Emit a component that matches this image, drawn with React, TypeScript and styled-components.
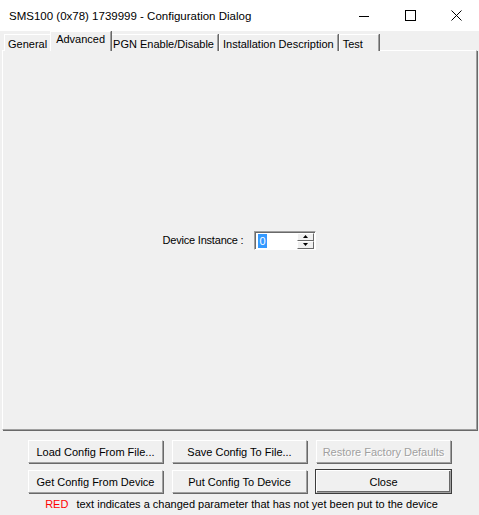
import React from 'react'
import styled, { createGlobalStyle } from 'styled-components'

const GlobalStyle = createGlobalStyle`
  html, body {
    margin: 0;
    padding: 0;
    background: #f0f0f0;
  }
  * {
    box-sizing: border-box;
  }
`

const Window = styled.div`
  width: 479px;
  height: 515px;
  display: flex;
  flex-direction: column;
  background: #f0f0f0;
  font-family: 'Liberation Sans', Arial, sans-serif;
  font-size: 11px;
  color: #000;
  overflow: hidden;
`

const TitleBar = styled.div`
  height: 31px;
  flex-shrink: 0;
  display: flex;
  align-items: center;
  background: #fff;
`

const Title = styled.div`
  flex: 1;
  padding-left: 9px;
  font-size: 11.5px;
  color: #000;
`

const CaptionButton = styled.div`
  width: 46px;
  height: 31px;
  display: flex;
  align-items: center;
  justify-content: center;
`

const TabStrip = styled.div`
  height: 20px;
  flex-shrink: 0;
  display: flex;
  align-items: flex-end;
  padding-left: 4px;
  position: relative;
  z-index: 1;
`

const Tab = styled.div<{ $active?: boolean; $minWidth?: number }>`
  height: ${({ $active }) => ($active ? '20px' : '17px')};
  min-width: ${({ $minWidth }) => ($minWidth ? `${$minWidth}px` : '0')};
  margin: ${({ $active }) => ($active ? '0 -2px' : '0 1px 0 0')};
  padding: ${({ $active }) => ($active ? '1px 5px 0 5px' : '1px 3px 0 3px')};
  display: flex;
  align-items: ${({ $active }) => ($active ? 'flex-start' : 'center')};
  background: #f0f0f0;
  border-top: 1px solid #fff;
  border-left: 1px solid #fff;
  border-right: 1px solid #a0a0a0;
  box-shadow: 1px 0 0 #696969;
  white-space: nowrap;
  position: relative;
  z-index: ${({ $active }) => ($active ? 2 : 1)};
  font-size: 11px;
`

const Panel = styled.div`
  height: 380px;
  margin: -1px 2px 0 2px;
  flex-shrink: 0;
  display: flex;
  align-items: center;
  justify-content: center;
  border-top: 1px solid #fff;
  border-left: 1px solid #fff;
  border-right: 1px solid #a0a0a0;
  border-bottom: 1px solid #a0a0a0;
  box-shadow: 1px 1px 0 #696969;
`

const FieldRow = styled.div`
  display: flex;
  align-items: center;
  gap: 11px;
`

const FieldLabel = styled.span`
  font-size: 11px;
  letter-spacing: -0.2px;
`

const SpinBox = styled.div`
  width: 62px;
  height: 19px;
  display: flex;
  background: #fff;
  border-top: 1px solid #a0a0a0;
  border-left: 1px solid #a0a0a0;
  border-right: 1px solid #fff;
  border-bottom: 1px solid #fff;
  box-shadow: inset 1px 1px 0 #696969;
`

const SpinEdit = styled.div`
  flex: 1;
  padding: 2px 0 0 3px;
`

const Selected = styled.span`
  display: inline-block;
  background: #3399ff;
  color: #fff;
  padding: 0 1px;
  height: 14px;
  line-height: 14px;
  font-size: 11px;
`

const SpinButtons = styled.div`
  width: 18px;
  display: flex;
  flex-direction: column;
  padding: 1px 1px 0 0;
`

const SpinArrow = styled.div`
  flex: 1;
  display: flex;
  align-items: center;
  justify-content: center;
  background: #f0f0f0;
  border-top: 1px solid #fff;
  border-left: 1px solid #fff;
  border-right: 1px solid #696969;
  border-bottom: 1px solid #696969;
`

const Footer = styled.div`
  flex: 1;
  display: flex;
  flex-direction: column;
  align-items: center;
  padding-top: 10px;
`

const ButtonGrid = styled.div`
  display: grid;
  grid-template-columns: repeat(3, 135px);
  column-gap: 9px;
  row-gap: 7px;
`

const Button = styled.div<{ $default?: boolean; $disabled?: boolean }>`
  height: 23px;
  display: flex;
  align-items: center;
  justify-content: center;
  background: #f0f0f0;
  color: ${({ $disabled }) => ($disabled ? '#a0a0a0' : '#000')};
  border-top: 1px solid #fff;
  border-left: 1px solid #fff;
  border-right: 1px solid #a0a0a0;
  border-bottom: 1px solid #a0a0a0;
  box-shadow: ${({ $default }) =>
    $default
      ? '0 0 0 1px #3c3c3c, inset -1px -1px 0 #696969'
      : '1px 1px 0 #696969'};
  text-shadow: ${({ $disabled }) => ($disabled ? '1px 1px 0 #fff' : 'none')};
  font-size: 11px;
  white-space: nowrap;
`

const Note = styled.div`
  margin-top: 5px;
  font-size: 11px;
  display: flex;
  gap: 8px;
  margin-left: 4px;
`

const RedWord = styled.span`
  color: #ff0000;
`

export default function App() {
  return (
    <Window>
      <GlobalStyle />
      <TitleBar>
        <Title>SMS100 (0x78) 1739999 - Configuration Dialog</Title>
        <CaptionButton>
          <svg width="10" height="10" viewBox="0 0 10 10">
            <line x1="0" y1="5.5" x2="10" y2="5.5" stroke="#000" strokeWidth="1" />
          </svg>
        </CaptionButton>
        <CaptionButton>
          <svg width="11" height="11" viewBox="0 0 11 11">
            <rect x="0.5" y="0.5" width="10" height="10" fill="none" stroke="#000" strokeWidth="1" />
          </svg>
        </CaptionButton>
        <CaptionButton>
          <svg width="11" height="11" viewBox="0 0 11 11">
            <path d="M0.5 0.5 L10.5 10.5 M10.5 0.5 L0.5 10.5" stroke="#000" strokeWidth="1" />
          </svg>
        </CaptionButton>
      </TitleBar>

      <TabStrip>
        <Tab>General</Tab>
        <Tab $active>Advanced</Tab>
        <Tab>PGN Enable/Disable</Tab>
        <Tab>Installation Description</Tab>
        <Tab $minWidth={40}>Test</Tab>
      </TabStrip>

      <Panel>
        <FieldRow>
          <FieldLabel>Device Instance :</FieldLabel>
          <SpinBox>
            <SpinEdit>
              <Selected>0</Selected>
            </SpinEdit>
            <SpinButtons>
              <SpinArrow>
                <svg width="5" height="3" viewBox="0 0 5 3">
                  <path d="M2.5 0 L5 3 L0 3 Z" fill="#000" />
                </svg>
              </SpinArrow>
              <SpinArrow>
                <svg width="5" height="3" viewBox="0 0 5 3">
                  <path d="M0 0 L5 0 L2.5 3 Z" fill="#000" />
                </svg>
              </SpinArrow>
            </SpinButtons>
          </SpinBox>
        </FieldRow>
      </Panel>

      <Footer>
        <ButtonGrid>
          <Button>Load Config From File...</Button>
          <Button>Save Config To File...</Button>
          <Button $disabled>Restore Factory Defaults</Button>
          <Button>Get Config From Device</Button>
          <Button>Put Config To Device</Button>
          <Button $default>Close</Button>
        </ButtonGrid>
        <Note>
          <RedWord>RED</RedWord>
          <span>text indicates a changed parameter that has not yet been put to the device</span>
        </Note>
      </Footer>
    </Window>
  )
}
